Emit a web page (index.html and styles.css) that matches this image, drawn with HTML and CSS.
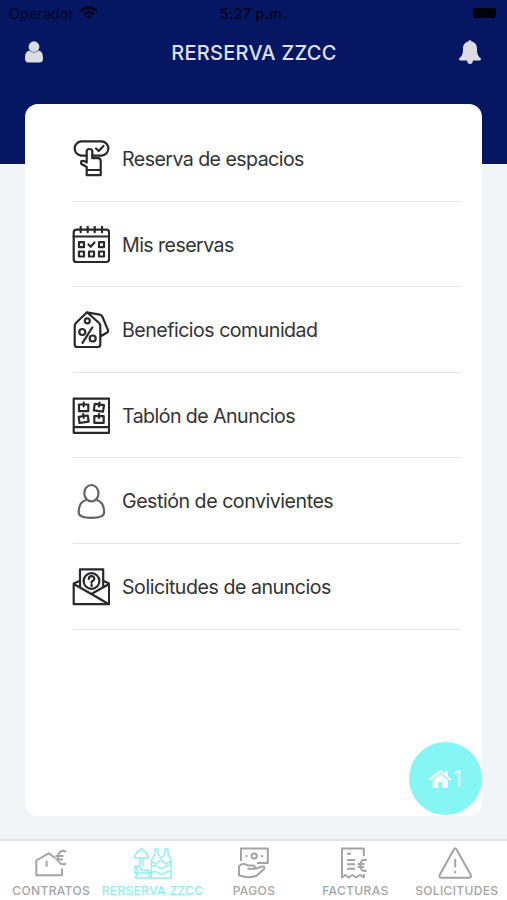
FILE: index.html
```html
<!DOCTYPE html>
<html lang="es">
<head>
<meta charset="utf-8">
<meta name="viewport" content="width=device-width, initial-scale=1">
<title>Reserva ZZCC</title>
<link rel="stylesheet" href="styles.css">
</head>
<body>
<div class="app">
  <header class="header">
    <div class="status">
      <div class="carrier"><span>Operador</span>
        <svg width="18" height="14" viewBox="0 0 18 14" fill="none" stroke="currentColor" stroke-width="2.6"><path d="M1 5.2Q9-1.8 17 5.2M4 8.4Q9 4 14 8.4"/><path d="M9 13L6.2 10.3Q9 8.2 11.8 10.3Z" fill="currentColor" stroke="none"/></svg>
      </div>
      <span class="time">5:27 p.m.</span>
      <span class="battery"></span>
    </div>
    <div class="navbar">
      <svg width="20" height="24" viewBox="0 0 20 24" fill="currentColor"><circle cx="10" cy="6.7" r="5.4"/><path d="M5.2 10.6Q10 14.5 14.8 10.6C18 11.4 19 14.5 19 18.5Q19 22.5 15.5 22.5H4.5Q1 22.5 1 18.5C1 14.5 2 11.4 5.2 10.6Z"/></svg>
      <h1 class="title">RERSERVA ZZCC</h1>
      <svg width="24" height="26" viewBox="0 0 24 26" fill="currentColor"><path d="M10.6 2.5Q10.6 1 12 1T13.4 2.5C17.5 3.2 19 6 19 10C19 15 20 17.3 23 19.5Q23.2 21.5 21.5 21.5H15Q14.5 25 12 25T9 21.5H2.5Q.8 21.5 1 19.5C4 17.3 5 15 5 10C5 6 6.5 3.2 10.6 2.5Z"/></svg>
    </div>
  </header>
  <main class="card">
    <ul class="menu">
      <li class="item">
        <svg class="icon" viewBox="0 0 38 38"><path d="M14.5 15.7H9A7.2 7.2 0 0 1 9 1.4H30A7.2 7.2 0 0 1 30 15.7H20.5M24 8.5L26.7 11L31.5 6"/><path d="M14.7 30V27L9.2 23.8V21.2Q11.5 20 14.7 22.5V11.5Q14.7 9 17.5 9T20.3 11.5V18.2H26Q28.7 18.2 28.7 21V30M14.7 30H28.7V35.2H14.7Z"/></svg>
        <span class="label tight">Reserva de espacios</span>
      </li>
      <li class="item">
        <svg class="icon" viewBox="0 0 38 38"><rect x="1.7" y="3.7" width="35.4" height="32.3" rx="2.8"/><path d="M1.7 10.5H37.1M8.7.8V6.2M15.7.8V6.2M22.7.8V6.2M30 .8V6.2M16.5 18.5L18.7 20.8L22.5 16.5"/><path d="M7 16.2H12V21.2H7ZM27 16.2H32V21.2H27ZM7 25.5H12V30.5H7ZM17 25.5H22V30.5H17ZM27 25.5H32V30.5H27Z"/></svg>
        <span class="label tight">Mis reservas</span>
      </li>
      <li class="item">
        <svg class="icon" viewBox="0 0 38 38"><path d="M15 1.2L26.8 11.8Q28.3 13 28.3 15V33.5Q28.3 36 25.8 36H5.2Q2.7 36 2.7 33.5V15Q2.7 13 4.2 11.8ZM16 1.5L27.7 3.7Q29.7 4 30.5 6L36 19.2Q36.5 20.5 35.2 21.5L28.7 25.3"/><circle cx="15.3" cy="9.8" r="2.5"/><circle cx="10.3" cy="21" r="3"/><circle cx="20.7" cy="27.5" r="3"/><path d="M20.3 16.5L10.5 31.8"/></svg>
        <span class="label">Beneficios comunidad</span>
      </li>
      <li class="item">
        <svg class="icon" viewBox="0 0 38 38"><path d="M1.7 1.7H37.1V35.8H1.7ZM1.7 30.2H37.1"/><path d="M7 7.5H16.3V14.2H7ZM11.7 5.7V9.5M22.7 6.8L32 8.2L31 14.7L21.8 13.3ZM27.5 5.5L27 9.5M6.7 19.8L15.7 18.5L16.7 24.7L7.5 26ZM11.2 17.2L11.8 20.8M22.3 19.2H31.7V25.8H22.3ZM27 17.2V21"/></svg>
        <span class="label tight">Tablón de Anuncios</span>
      </li>
      <li class="item">
        <svg class="icon soft" viewBox="0 0 38 38"><ellipse cx="19.4" cy="11.2" rx="7.1" ry="8.2"/><path d="M13.6 18.2C9 19.5 6.7 23.5 6.7 30.5C6.7 34.2 11 35.8 19.4 35.8S32.1 34.2 32.1 30.5C32.1 23.5 29.8 19.5 25.2 18.2"/></svg>
        <span class="label loose">Gestión de convivientes</span>
      </li>
      <li class="item">
        <svg class="icon" viewBox="0 0 38 38"><path d="M8 18.5V1.3H31.2V18.5M8 12.8L1.7 15.5V36.2H37.1V15.5L31.2 12.8M1.7 16L19.4 26L37.1 16M19.4 26L36.5 36"/><circle cx="19.5" cy="13" r="7.9"/><path d="M16.8 11Q16.8 8.2 19.6 8.2T22.3 11Q22.3 12.3 19.6 13.5V15M19.6 16.8V18"/></svg>
        <span class="label loose">Solicitudes de anuncios</span>
      </li>
    </ul>
    <button class="fab">
      <svg width="23" height="20" viewBox="0 0 23 20" fill="currentColor"><path d="M0 10.2L10 1.5Q11.3.4 12.6 1.5L15.8 4.3V2H19V7.2L22.5 10.2L21.2 11.7L11.3 3.2L1.4 11.7Z"/><path d="M3.8 11.3L11.3 4.9L18.8 11.3V18.8H13.3V13H9.3V18.8H3.8Z"/></svg>
      <span>1</span>
    </button>
  </main>
  <nav class="tabs">
    <a class="tab">
      <svg class="tab-icon" viewBox="0 0 40 34"><path d="M24.3 12.3L18 7.2L5.3 14.5V29.3H31V22.5M15.6 14.8V20.8M35 5.8C30 3 26.8 7 26.8 11.7S30 20 35 17.5M24.5 10H32.5M24.5 13.5H32"/></svg>
      <span class="tab-text">CONTRATOS</span>
    </a>
    <a class="tab active">
      <svg class="tab-icon fine" viewBox="0 0 40 34"><path d="M2.5 12Q4 5.5 8.5 4L9.5 2L10.5 4Q15 5.5 16.3 12ZM8 12V20M11 12V20M3 20H7L9 24H17L18.5 27H3ZM4 20L6 27M5 27L3.5 32M16 27L18 32M19.5 32V14L23 8V3H26V8L29 12L33 8V3H36V8L39 14V32ZM19.5 15L23.5 18L29 14L34 18L39 15M19.5 21Q23 18 26.5 21T33 21T39 20M19.5 27Q23 24 26.5 27T33 27T39 26M3 32H39"/></svg>
      <span class="tab-text">RERSERVA ZZCC</span>
    </a>
    <a class="tab">
      <svg class="tab-icon" viewBox="0 0 40 34"><path d="M8 15V2.5H34.8V17H24M12.5 10H14.5M28 10H30"/><circle cx="21.2" cy="10" r="2.6"/><path d="M6 20Q9 17.5 12 18.2L15 19.5H20Q22.5 20 22 22.8H14.5M22 22.8L29 20.5Q32.5 20.2 31 23L24 29.5Q18 32 13 31L6 29.5V20"/></svg>
      <span class="tab-text">PAGOS</span>
    </a>
    <a class="tab">
      <svg class="tab-icon" viewBox="0 0 40 34"><path d="M28.8 10V2.5H7V31.5L10.2 29L13.5 31.5L17.5 29L21 31.5L25 29L28.8 31.5V28M12 7.7H16M12 14H20M12 18.3H20M12 22.7H20M31.8 14.2C27.5 12.5 25.2 15.5 25.2 19.3S27.5 26 31.8 24.5M22.8 18H29.5M22.8 21H29"/></svg>
      <span class="tab-text">FACTURAS</span>
    </a>
    <a class="tab">
      <svg class="tab-icon" viewBox="0 0 40 34"><path d="M17.8 3.5Q19.2 1.2 20.6 3.5L34.8 29Q35.7 31.5 33 31.8H5.5Q2.8 31.5 3.7 29ZM19.2 13V21.5M19.2 25V27.3"/></svg>
      <span class="tab-text">SOLICITUDES</span>
    </a>
  </nav>
</div>
</body>
</html>
```
FILE: styles.css
```css
* { box-sizing: border-box; }
body { margin: 0; background: #f2f5f7; font-family: Inter, "Liberation Sans", sans-serif; }
.app { display: flex; flex-direction: column; height: 900px; overflow: hidden; }
.header { height: 164px; flex: none; background: #071663; }
.status { display: grid; grid-template-columns: 1fr auto 1fr; align-items: center; height: 28px; padding: 0 9px; color: #01051f; font-size: 14px; }
.carrier { display: flex; align-items: center; gap: 6px; margin-top: -2px; letter-spacing: .3px; }
.time { margin-top: -1px; font-weight: 600; letter-spacing: .4px; }
.battery { justify-self: end; width: 23px; height: 10px; margin: -2px 2px 0 0; border-radius: 3px; background: #00020c; }
.navbar { display: flex; align-items: center; justify-content: space-between; height: 48px; padding: 0 25px 0 24px; color: #dadde3; }
.title { margin: 0; padding: 1px 0 0 6px; font-size: 20px; font-weight: 500; line-height: 24px; letter-spacing: .25px; color: #dde1ee; }
.card { position: relative; flex: none; height: 712px; margin: -60px 25px 0; padding: 12px 22px 0 48px; border-radius: 13px; background: #fff; }
.menu { margin: 0; padding: 0; list-style: none; }
.item { display: flex; align-items: center; gap: 12px; height: 85.6px; padding-top: 1.5px; border-bottom: 1px solid #e7e7e9; }
.icon { width: 38px; height: 38px; margin-left: -1px; flex: none; fill: none; stroke: #29292b; stroke-width: 2.2; stroke-linejoin: round; stroke-linecap: round; }
.soft { stroke: #636365; }
.label { font-size: 19.6px; line-height: 26px; letter-spacing: -.51px; color: #333335; white-space: nowrap; }
.tight { letter-spacing: -.56px; }
.loose { letter-spacing: -.47px; }
.fab { position: absolute; right: 0; bottom: 1px; display: flex; align-items: center; justify-content: center; gap: 1px; width: 73px; height: 73px; padding: 0; border: 0; border-radius: 50%; background: #86f6f4; color: #fff; font: 300 23px Inter, sans-serif; }
.tabs { display: grid; grid-template-columns: repeat(5, 1fr); height: 61px; margin-top: auto; border-top: 2px solid #e3e4e7; background: #fff; }
.tab { display: flex; flex-direction: column; align-items: center; min-width: 0; padding-top: 5px; color: #a4a4a6; }
.tab-icon { width: 40px; height: 34px; flex: none; fill: none; stroke: currentColor; stroke-width: 2; stroke-linejoin: round; }
.fine { stroke-width: 1.4; }
.active { color: #8deff0; }
.tab-text { margin-top: 4px; padding-left: 1px; font-size: 12px; font-weight: 500; line-height: 14px; letter-spacing: .35px; white-space: nowrap; }
```
